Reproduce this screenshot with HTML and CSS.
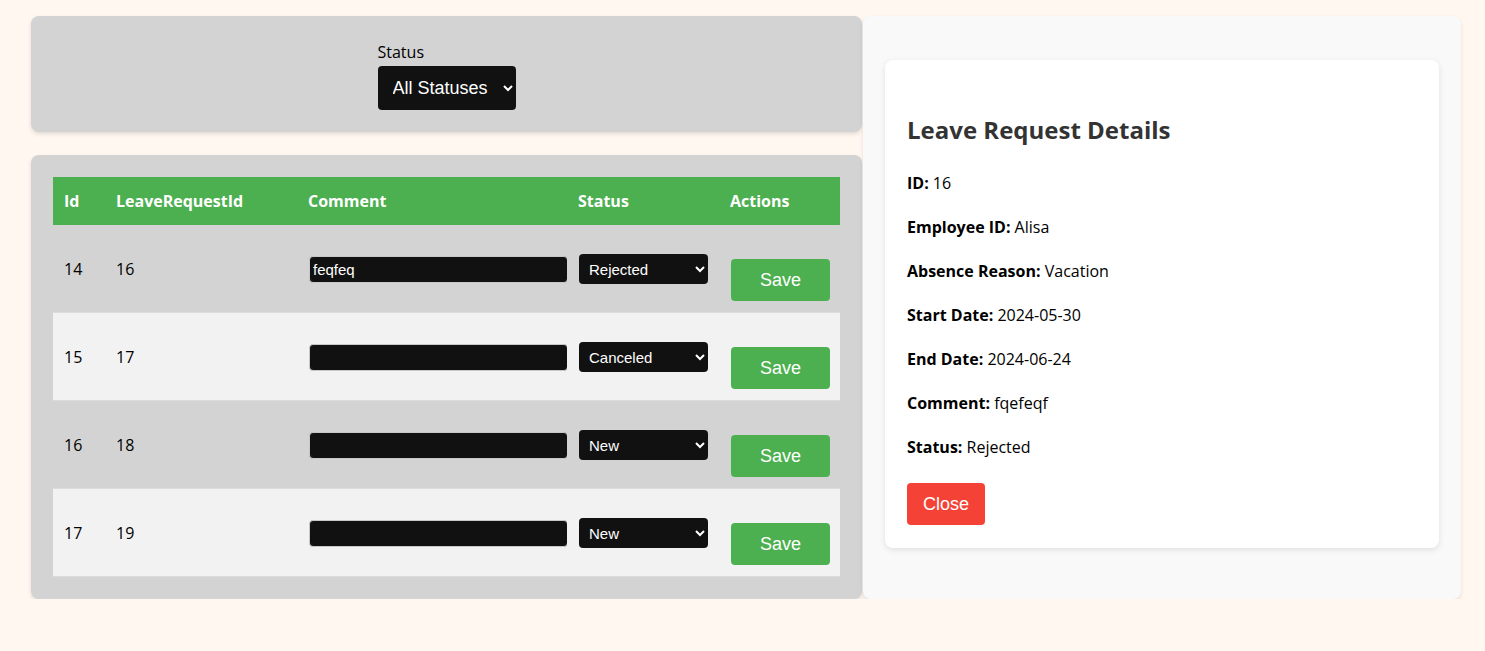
FILE: index.html
```html
<!DOCTYPE html>
<html lang="en">
<head>
<meta charset="utf-8">
<title>Leave Request Comments</title>
<link rel="stylesheet" href="styles.css">
</head>
<body>
<div class="page">
  <div class="left">
    <div class="card filter-card">
      <div class="filter">
        <label class="filter-label" for="statusFilter">Status</label>
        <select id="statusFilter" class="filter-select">
          <option>All Statuses</option>
        </select>
      </div>
    </div>
    <div class="card table-card">
      <table class="grid">
        <thead>
          <tr>
            <th class="c-id">Id</th>
            <th class="c-lr">LeaveRequestId</th>
            <th class="c-comment">Comment</th>
            <th class="c-status">Status</th>
            <th class="c-actions">Actions</th>
          </tr>
        </thead>
        <tbody>
          <tr>
            <td>14</td><td>16</td>
            <td><input class="cell-input" type="text" value="feqfeq"></td>
            <td><select class="cell-select"><option>Rejected</option></select></td>
            <td><button class="btn-save">Save</button></td>
          </tr>
          <tr>
            <td>15</td><td>17</td>
            <td><input class="cell-input" type="text" value=""></td>
            <td><select class="cell-select"><option>Canceled</option></select></td>
            <td><button class="btn-save">Save</button></td>
          </tr>
          <tr>
            <td>16</td><td>18</td>
            <td><input class="cell-input" type="text" value=""></td>
            <td><select class="cell-select"><option>New</option></select></td>
            <td><button class="btn-save">Save</button></td>
          </tr>
          <tr>
            <td>17</td><td>19</td>
            <td><input class="cell-input" type="text" value=""></td>
            <td><select class="cell-select"><option>New</option></select></td>
            <td><button class="btn-save">Save</button></td>
          </tr>
        </tbody>
      </table>
    </div>
  </div>
  <div class="right">
    <div class="details">
      <h2 class="details-title">Leave Request Details</h2>
      <p class="details-row"><strong>ID:</strong> 16</p>
      <p class="details-row"><strong>Employee ID:</strong> Alisa</p>
      <p class="details-row"><strong>Absence Reason:</strong> Vacation</p>
      <p class="details-row"><strong>Start Date:</strong> 2024-05-30</p>
      <p class="details-row"><strong>End Date:</strong> 2024-06-24</p>
      <p class="details-row"><strong>Comment:</strong> fqefeqf</p>
      <p class="details-row"><strong>Status:</strong> Rejected</p>
      <button class="btn-close">Close</button>
    </div>
  </div>
</div>
</body>
</html>
```

FILE: styles.css
```css
* { box-sizing: border-box; }

html, body {
  margin: 0;
  padding: 0;
  background: #fff7f0;
}

body {
  font-family: "Open Sans", "Noto Sans", sans-serif;
  font-size: 16px;
  color: #000;
}

.page {
  display: flex;
  align-items: stretch;
  padding: 16px 24px 0 31px;
  gap: 1px;
}

.left {
  width: 831px;
  display: flex;
  flex-direction: column;
  gap: 23px;
}

.card {
  background: #d3d3d3;
  border-radius: 8px;
  box-shadow: 0 2px 4px rgba(0, 0, 0, 0.12);
}

.filter-card {
  height: 116px;
  display: flex;
  justify-content: center;
  padding-top: 26px;
}

.filter {
  display: flex;
  flex-direction: column;
  align-items: flex-start;
}

.filter-label {
  font-size: 16px;
  line-height: 21px;
  margin-bottom: 3px;
}

.filter-select {
  width: 138px;
  height: 44px;
  background: #111;
  color: #fff;
  border: none;
  border-radius: 4px;
  font-family: "Liberation Sans", Arial, sans-serif;
  font-size: 18px;
  padding: 0 8px 0 11px;
}

.table-card {
  padding: 22px;
}

.grid {
  width: 787px;
  border-collapse: collapse;
  table-layout: fixed;
}

.grid th {
  background: #4caf50;
  color: #fff;
  font-weight: 700;
  text-align: left;
  padding: 12px 11px;
  line-height: 24px;
}

.grid td {
  padding: 12px 11px 11px;
  vertical-align: middle;
  line-height: 22px;
  border-bottom: 1px solid #dcdcdc;
}

.grid tbody tr:nth-child(odd) td { background: #d3d3d3; }
.grid tbody tr:nth-child(even) td { background: #f2f2f2; }

.c-id { width: 52px; }
.c-lr { width: 192px; }
.c-comment { width: 270px; }
.c-status { width: 152px; }
.c-actions { width: 121px; }

.cell-input {
  display: block;
  width: 259px;
  height: 27px;
  background: #111;
  color: #fff;
  border: 1px solid #c8c8c8;
  border-radius: 4px;
  font-family: "Liberation Sans", Arial, sans-serif;
  font-size: 15px;
  padding: 0 3px;
  margin-left: 1px;
}

.cell-select {
  display: block;
  width: 129px;
  height: 30px;
  background: #111;
  color: #fff;
  border: none;
  border-radius: 4px;
  font-family: "Liberation Sans", Arial, sans-serif;
  font-size: 15px;
  padding: 0 4px 0 6px;
  margin-left: 1px;
}

.btn-save {
  display: block;
  margin-top: 22px;
  margin-left: 1px;
  width: 99px;
  height: 42px;
  background: #4caf50;
  color: #fff;
  border: none;
  border-radius: 4px;
  font-family: "Liberation Sans", Arial, sans-serif;
  font-size: 18px;
  cursor: pointer;
}

.right {
  width: 598px;
  background: #f9f9f9;
  border-radius: 8px;
  box-shadow: 0 2px 4px rgba(0, 0, 0, 0.1);
  padding: 44px 22px 51px;
}

.details {
  background: #fff;
  border-radius: 8px;
  box-shadow: 0 2px 6px rgba(0, 0, 0, 0.1);
  padding: 54px 22px 23px;
}

.details-title {
  margin: 0 0 23px;
  font-size: 24px;
  line-height: 32px;
  font-weight: 700;
  color: #333;
}

.details-row {
  margin: 0 0 16px;
  line-height: 28px;
}

.details-row strong { font-weight: 700; }

.btn-close {
  display: block;
  margin-top: 22px;
  width: 78px;
  height: 42px;
  background: #f44336;
  color: #fff;
  border: none;
  border-radius: 4px;
  font-family: "Liberation Sans", Arial, sans-serif;
  font-size: 18px;
  cursor: pointer;
}
```
